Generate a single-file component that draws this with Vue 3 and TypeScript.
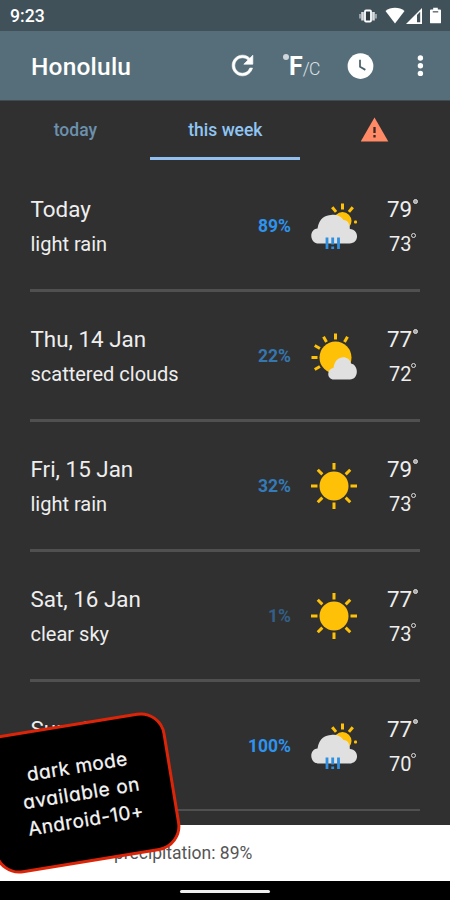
<script setup lang="ts">
type Sky = 'rain' | 'cloud' | 'sun'

interface Day {
  name: string
  summary: string
  chance: number
  tint: string
  sky: Sky
  high: number
  low: number
}

const days: Day[] = [
  { name: 'Today', summary: 'light rain', chance: 89, tint: '#2e93ec', sky: 'rain', high: 79, low: 73 },
  { name: 'Thu, 14 Jan', summary: 'scattered clouds', chance: 22, tint: '#3676ae', sky: 'cloud', high: 77, low: 72 },
  { name: 'Fri, 15 Jan', summary: 'light rain', chance: 32, tint: '#347bb8', sky: 'sun', high: 79, low: 73 },
  { name: 'Sat, 16 Jan', summary: 'clear sky', chance: 1, tint: '#335f86', sky: 'sun', high: 77, low: 73 },
  { name: 'Sun, 17 Jan', summary: 'light rain', chance: 100, tint: '#2e93ec', sky: 'rain', high: 77, low: 70 },
]

const allRays: number[] = [0, 45, 90, 135, 180, 225, 270, 315]
const cloudRays: number[] = [-120, -90, -60, -30, 0, 30]
const rainRays: number[] = [-40, 0, 40]
</script>

<template>
  <div class="screen">
    <header class="status">
      <span class="clock">9:23</span>
      <svg class="vibrate" width="18" height="14" viewBox="0 0 18 14">
        <path d="M1 5v4.500M17 5v4.500" stroke="#aab5bb" stroke-width="1.600" />
        <path d="M3.500 3v8.500M14.500 3v8.500" stroke="#d5dbde" stroke-width="2.600" />
        <rect x="6" y="1.500" width="6" height="11" rx="1" fill="#2f3c43" stroke="#fff" stroke-width="1.800" />
      </svg>
      <svg class="wifi" width="20" height="17" viewBox="0 0 20 17">
        <path d="M0.500 4C5.500-.3 14.500-.3 19.500 4L10 16.500z" fill="#fff" />
      </svg>
      <svg class="signal" width="16" height="16" viewBox="0 0 16 16">
        <path d="M0 16L16 0v16z" fill="#fff" />
        <path d="M11 7l3.200-3.200v10.500H11z" fill="#43535c" />
      </svg>
      <svg class="battery" width="11" height="17" viewBox="0 0 12 17">
        <path d="M3.500 0h5v2H11q1 0 1 1v13q0 1-1 1H1q-1 0-1-1V3q0-1 1-1h2.500z" fill="#fff" />
        <path d="M3 4.500h6" stroke="#43535c" stroke-width="1.300" />
      </svg>
    </header>

    <nav class="appbar">
      <h1>Honolulu</h1>
      <svg class="refresh" width="31" height="31" viewBox="0 0 24 24">
        <path fill="#fff" d="M17.650 6.350C16.200 4.900 14.210 4 12 4c-4.420 0-7.990 3.580-7.990 8s3.570 8 7.990 8c3.730 0 6.840-2.550 7.730-6h-2.080c-.82 2.330-3.040 4-5.650 4-3.310 0-6-2.690-6-6s2.690-6 6-6c1.660 0 3.140.69 4.220 1.780L13 11h7V4l-2.350 2.350z" stroke="#fff" stroke-width=".5" />
      </svg>
      <span class="units"><i class="ring"></i><b>F</b><span>/C</span></span>
      <svg class="clock-icon" width="30" height="30" viewBox="0 0 24 24">
        <circle cx="12.400" cy="12" r="10.300" fill="#fff" />
        <path d="M12 7v5.600l4.300 2.500" fill="none" stroke="#4d6069" stroke-width="1.400" />
      </svg>
      <svg class="more" width="8" height="22" viewBox="0 0 8 22">
        <circle cx="4.400" cy="3" r="2.700" fill="#fff" />
        <circle cx="4.400" cy="10.700" r="2.700" fill="#fff" />
        <circle cx="4.400" cy="18.400" r="2.700" fill="#fff" />
      </svg>
    </nav>

    <div class="tabs">
      <div class="tab"><span>today</span></div>
      <div class="tab active"><span>this week</span></div>
      <div class="tab">
        <svg class="alert" width="28" height="25" viewBox="0 0 28 25">
          <path d="M13.500 .5L27.300 24.500H-.3z" fill="#ff8a65" />
          <path d="M13.500 10v6M13.500 18v2.500" stroke="#3a2a25" stroke-width="2.300" />
        </svg>
      </div>
    </div>

    <main class="list">
      <section v-for="day in days" :key="day.name" class="row">
        <div class="label">
          <div class="name">{{ day.name }}</div>
          <div class="summary">{{ day.summary }}</div>
        </div>
        <div class="chance" :style="{ color: day.tint }">{{ day.chance }}%</div>
        <svg class="sky" width="50" height="50" viewBox="0 0 50 50">
          <g v-if="day.sky === 'sun'">
            <path v-for="a in allRays" :key="a" d="M25 2v6.500" :transform="`rotate(${a} 25 25)`" class="ray" />
            <circle cx="25" cy="25" r="14.500" fill="#ffc107" />
          </g>
          <g v-else-if="day.sky === 'cloud'">
            <path v-for="a in cloudRays" :key="a" d="M26.500 2.500v6" :transform="`rotate(${a} 26.500 26.500)`" class="ray" />
            <circle cx="26.500" cy="26.500" r="16" fill="#ffc107" />
            <path d="M25 48.500C17.500 48.500 17.500 38 24.500 37C26 23.500 40 23.500 42 32.500C50 34 50 48.500 41 48.500z" fill="#e0e0e0" />
          </g>
          <g v-else>
            <path v-for="a in rainRays" :key="a" d="M33.500 2.500v6" :transform="`rotate(${a} 33.500 18.500)`" class="ray" />
            <rect x="45" y="19.500" width="3" height="3" rx="1" fill="#ffc107" />
            <circle cx="33.500" cy="20" r="9" fill="#ffc107" />
            <path d="M10 42.500C.5 42.500-.5 28.500 8.500 27.500C10 17 17 14 22 14C27 13 32 15 34.500 19C39 19 41 23 40.800 28C51 29 50 42.500 40.500 42.500z" fill="#e0e0e0" />
            <path d="M18 36.500v11.500M29.500 36.500v11.500M23.700 36.500v7M23.700 45.500v2.500" stroke="#2f8fe0" stroke-width="2.800" />
          </g>
        </svg>
        <div class="temps">
          <div class="high">{{ day.high }}<i class="degree"></i></div>
          <div class="low">{{ day.low }}<i class="degree"></i></div>
        </div>
      </section>
    </main>

    <div class="toast"><span>precipitation: 89%</span></div>
    <footer class="home"><div class="pill"></div></footer>

    <aside class="sticker">
      <div class="l1">dark mode</div>
      <div class="l2">available on</div>
      <div class="l3">Android-10+</div>
    </aside>
  </div>
</template>

<style>
body { margin: 0; background: #303030; }
</style>

<style scoped>
.screen { position: relative; width: 450px; height: 900px; overflow: hidden; display: flex; flex-direction: column; background: #303030; font-family: Roboto, "Liberation Sans", sans-serif; box-sizing: border-box; }
svg { display: block; flex: none; }
.status { height: 31px; flex: none; display: flex; align-items: center; padding: 0 9px 0 10px; background: #40515a; box-sizing: border-box; }
.clock { font-size: 17.600px; font-weight: 500; color: #fff; line-height: 31px; margin-right: auto; padding-top: 1px; }
.wifi { margin-left: 8px; }
.signal { margin-left: 1px; }
.battery { margin-left: 8px; }
.appbar { height: 70px; flex: none; display: flex; align-items: center; padding: 0 26px 0 31px; background: #566e7a; box-sizing: border-box; border-bottom: 1px solid #414c52; }
h1 { margin: 0 auto 0 0; padding-top: 2px; font-size: 24.500px; font-weight: 500; line-height: 28px; color: #fff; letter-spacing: .2px; }
.units { display: flex; align-items: baseline; color: #fff; margin-left: 25px; width: 36px; margin-right: 26px; line-height: 30px; padding-top: 4px; }
.units b { font-size: 25px; font-weight: 700; }
.units span { font-size: 17.500px; font-weight: 300; color: #dce2e5; letter-spacing: -.8px; }
.ring { width: 6px; height: 6px; border-radius: 50%; background: #cfd7db; flex: none; align-self: flex-start; margin: 2px 0 0; }
.more { margin-left: 41px; }
.tabs { height: 59px; flex: none; display: grid; grid-template-columns: repeat(3, 150px); padding-left: .400px; }
.tab { display: flex; justify-content: center; align-items: center; box-sizing: border-box; border-bottom: 3px solid transparent; font-size: 17.500px; font-weight: 500; color: #6c91ae; }
.tab span { padding-top: 1px; }
.tab.active { color: #90c5f3; border-color: #90bff0; }
.list { height: 665px; flex: none; overflow: hidden; padding: 1.500px 30px 0; box-sizing: border-box; }
.row { height: 130px; box-sizing: border-box; border-bottom: 3px solid #505050; display: flex; align-items: flex-start; color: #eee; }
.row:last-child { height: 129px; border-bottom-width: 2px; }
.label { width: 190px; padding-top: 33px; white-space: nowrap; box-sizing: border-box; padding-left: .500px; }
.name, .high { font-size: 22.400px; line-height: 28px; }
.summary, .low { font-size: 20px; line-height: 28px; margin-top: 7px; }
.chance { width: 71px; text-align: right; font-size: 17.500px; font-weight: 700; line-height: 24px; padding-top: 52px; }
.sky { margin: 39px 0 0 18px; }
.ray { stroke: #ffc107; stroke-width: 3; fill: none; }
.temps { margin-left: auto; padding-top: 33px; width: 33px; white-space: nowrap; }
.high, .low { display: flex; }
.low { padding-left: 2px; }
.degree { width: 5px; height: 5px; box-sizing: border-box; border: 1.300px solid #ddd; border-radius: 50%; margin: 4px 0 0 1px; }
.high .degree { background: #aaa; }
.low .degree { margin: 3px 0 0; }
.toast { height: 56px; flex: none; background: #fff; box-sizing: border-box; padding-left: 114px; color: #555; font-size: 17.500px; line-height: 56px; }
.home { height: 19px; flex: none; background: #000; display: flex; justify-content: center; align-items: center; }
.pill { width: 90px; height: 3px; border-radius: 2px; background: #eee; margin-top: 2px; }
.sticker { position: absolute; left: -14px; top: 723px; width: 188px; height: 140px; box-sizing: border-box; border: 3px solid #dc2508; border-radius: 25px; background: #000; color: #f5f5f5; transform: rotate(-9.300deg); font-family: Inter, Lato, sans-serif; font-feature-settings: "cv11"; font-size: 19px; line-height: 27px; text-align: center; padding: 27px 0 0 3px; -webkit-text-stroke: .3px #f5f5f5; }
.l1 { letter-spacing: .5px; }
.l2 { letter-spacing: .7px; }
.l3 { letter-spacing: .5px; }
</style>
